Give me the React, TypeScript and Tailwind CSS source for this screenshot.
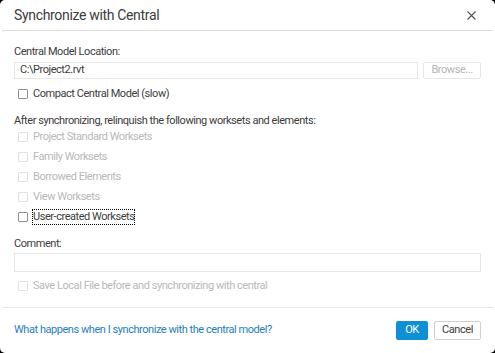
import React from "react";

function Check({ disabled, focus, label }: { disabled?: boolean; focus?: boolean; label: string }) {
  return (
    <div className="flex items-center h-[20px] pl-[4px]">
      <span
        className={
          "w-[10px] h-[10px] border rounded-[1px] bg-white shrink-0 " +
          (disabled ? "border-[#e0e0e0]" : "border-[#8f8f8f]")
        }
      />
      <span
        className={
          "ml-[5px] leading-[14px] " +
          (disabled ? "text-[#b8b8b8]" : "text-[#3c3c3c]") +
          (focus ? " outline outline-1 outline-dotted outline-black" : "")
        }
      >
        {label}
      </span>
    </div>
  );
}

export default function App() {
  return (
    <div className="w-[495px] h-[353px] bg-black">
      <div
        className="w-[495px] h-[353px] bg-white rounded-[5px] flex flex-col text-[11px] tracking-[-0.45px] text-[#3c3c3c] overflow-hidden"
        style={{ fontFamily: "Roboto, 'Noto Sans', sans-serif" }}
      >
        <div className="h-[31px] flex items-center justify-between pl-[12px] pr-[17px] mx-[2px] border-b border-[#dcdcdc]">
          <span className="text-[14px] tracking-[-0.33px] text-[#3c3c3c]">Synchronize with Central</span>
          <svg width="9" height="9" viewBox="0 0 9 9" className="text-[#555]">
            <path d="M0.5 0.5L8.5 8.5M8.5 0.5L0.5 8.5" stroke="currentColor" strokeWidth="1.1" />
          </svg>
        </div>
        <div className="px-[14px] pt-[14px] flex flex-col flex-1">
          <div className="leading-[14px]">Central Model Location:</div>
          <div className="flex gap-[5px] mt-[3px]">
            <div className="w-[405px] h-[17px] border border-[#e6e6e6] flex items-center pl-[5px] text-[#3c3c3c]">
              C:\Project2.rvt
            </div>
            <div className="w-[58px] h-[17px] border border-[#e6e6e6] rounded-[2px] flex items-center justify-center text-[#b5b5b5]">
              Browse...
            </div>
          </div>
          <div className="mt-[5px]">
            <Check label="Compact Central Model (slow)" />
          </div>
          <div className="mt-[10px] leading-[14px]">
            After synchronizing, relinquish the following worksets and elements:
          </div>
          <div className="flex flex-col mt-[-1px]">
            <Check disabled label="Project Standard Worksets" />
            <Check disabled label="Family Worksets" />
            <Check disabled label="Borrowed Elements" />
            <Check disabled label="View Worksets" />
            <Check focus label="User-created Worksets" />
          </div>
          <div className="mt-[10px] leading-[14px]">Comment:</div>
          <div className="mt-[2px] h-[19px] border border-[#e6e6e6]" />
          <div className="mt-[4px]">
            <Check disabled label="Save Local File before and synchronizing with central" />
          </div>
        </div>
        <div className="mx-[2px] border-t border-[#e6e6e6] h-[46px] flex items-center justify-between pl-[12px] pr-[12px]">
          <span className="text-[#1e7fc0]">What happens when I synchronize with the central model?</span>
          <div className="flex gap-[6px]">
            <button className="w-[32px] h-[19px] bg-[#0f8fd4] text-white rounded-[2px]">OK</button>
            <button className="w-[47px] h-[19px] border border-[#cfcfcf] bg-white text-[#3c3c3c] rounded-[2px]">
              Cancel
            </button>
          </div>
        </div>
      </div>
    </div>
  );
}
